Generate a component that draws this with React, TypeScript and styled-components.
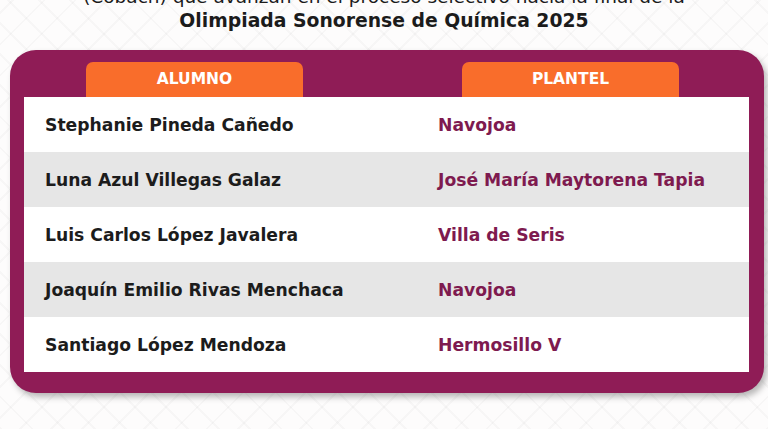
import React from "react";
import styled, { createGlobalStyle } from "styled-components";

const Global = createGlobalStyle`
  html, body { margin: 0; padding: 0; }
  body {
    width: 768px;
    height: 429px;
    overflow: hidden;
    font-family: "DejaVu Sans", "Open Sans", sans-serif;
    background-color: #fdfcfc;
    background-image:
      repeating-linear-gradient(45deg, rgba(0,0,0,0.022) 0 2px, transparent 2px 22px),
      repeating-linear-gradient(-45deg, rgba(0,0,0,0.022) 0 2px, transparent 2px 22px);
  }
`;

const Page = styled.div`
  width: 768px;
  height: 429px;
  overflow: hidden;
  display: flex;
  flex-direction: column;
`;

const Heading = styled.header`
  display: flex;
  flex-direction: column;
  align-items: center;
  margin-top: -15px;
  color: #1b1b1b;
`;

const Intro = styled.div`
  font-size: 18.5px;
  line-height: 24px;
  font-weight: 400;
  white-space: nowrap;
`;

const Title = styled.h1`
  margin: 0;
  font-size: 18.8px;
  line-height: 24px;
  font-weight: 700;
  white-space: nowrap;
`;

const Card = styled.section`
  margin: 17px 4px 0 10px;
  background: #8f1c56;
  border-radius: 26px;
  padding: 12px 15px 21px 14px;
  box-shadow: 3px 4px 6px rgba(0, 0, 0, 0.28);
  display: flex;
  flex-direction: column;
`;

const TabRow = styled.div`
  display: flex;
  gap: 159px;
  padding-left: 62px;
`;

const Tab = styled.div`
  width: 217px;
  height: 35px;
  background: #f96d2b;
  border-radius: 7px 7px 0 0;
  color: #ffffff;
  font-size: 15.5px;
  font-weight: 700;
  display: flex;
  align-items: center;
  justify-content: center;
  padding-bottom: 2px;
  box-sizing: border-box;
`;

const Table = styled.div`
  background: #ffffff;
  display: flex;
  flex-direction: column;
`;

const Row = styled.div<{ $shaded: boolean }>`
  height: 55px;
  display: grid;
  grid-template-columns: 414px 1fr;
  align-items: center;
  background: ${(p) => (p.$shaded ? "#e6e6e6" : "#ffffff")};
`;

const Name = styled.div`
  padding-left: 21px;
  color: #1c1c1c;
  font-size: 17.2px;
  font-weight: 700;
  white-space: nowrap;
`;

const Campus = styled.div`
  color: #7e1a4f;
  font-size: 17.2px;
  font-weight: 700;
  white-space: nowrap;
`;

const rows = [
  ["Stephanie Pineda Cañedo", "Navojoa"],
  ["Luna Azul Villegas Galaz", "José María Maytorena Tapia"],
  ["Luis Carlos López Javalera", "Villa de Seris"],
  ["Joaquín Emilio Rivas Menchaca", "Navojoa"],
  ["Santiago López Mendoza", "Hermosillo V"],
];

export default function App() {
  return (
    <Page>
      <Global />
      <Heading>
        <Intro>(Cobach) que avanzan en el proceso selectivo hacia la final de la</Intro>
        <Title>Olimpiada Sonorense de Química 2025</Title>
      </Heading>
      <Card>
        <TabRow>
          <Tab>ALUMNO</Tab>
          <Tab>PLANTEL</Tab>
        </TabRow>
        <Table>
          {rows.map(([n, c], i) => (
            <Row key={n} $shaded={i % 2 === 1}>
              <Name>{n}</Name>
              <Campus>{c}</Campus>
            </Row>
          ))}
        </Table>
      </Card>
    </Page>
  );
}
